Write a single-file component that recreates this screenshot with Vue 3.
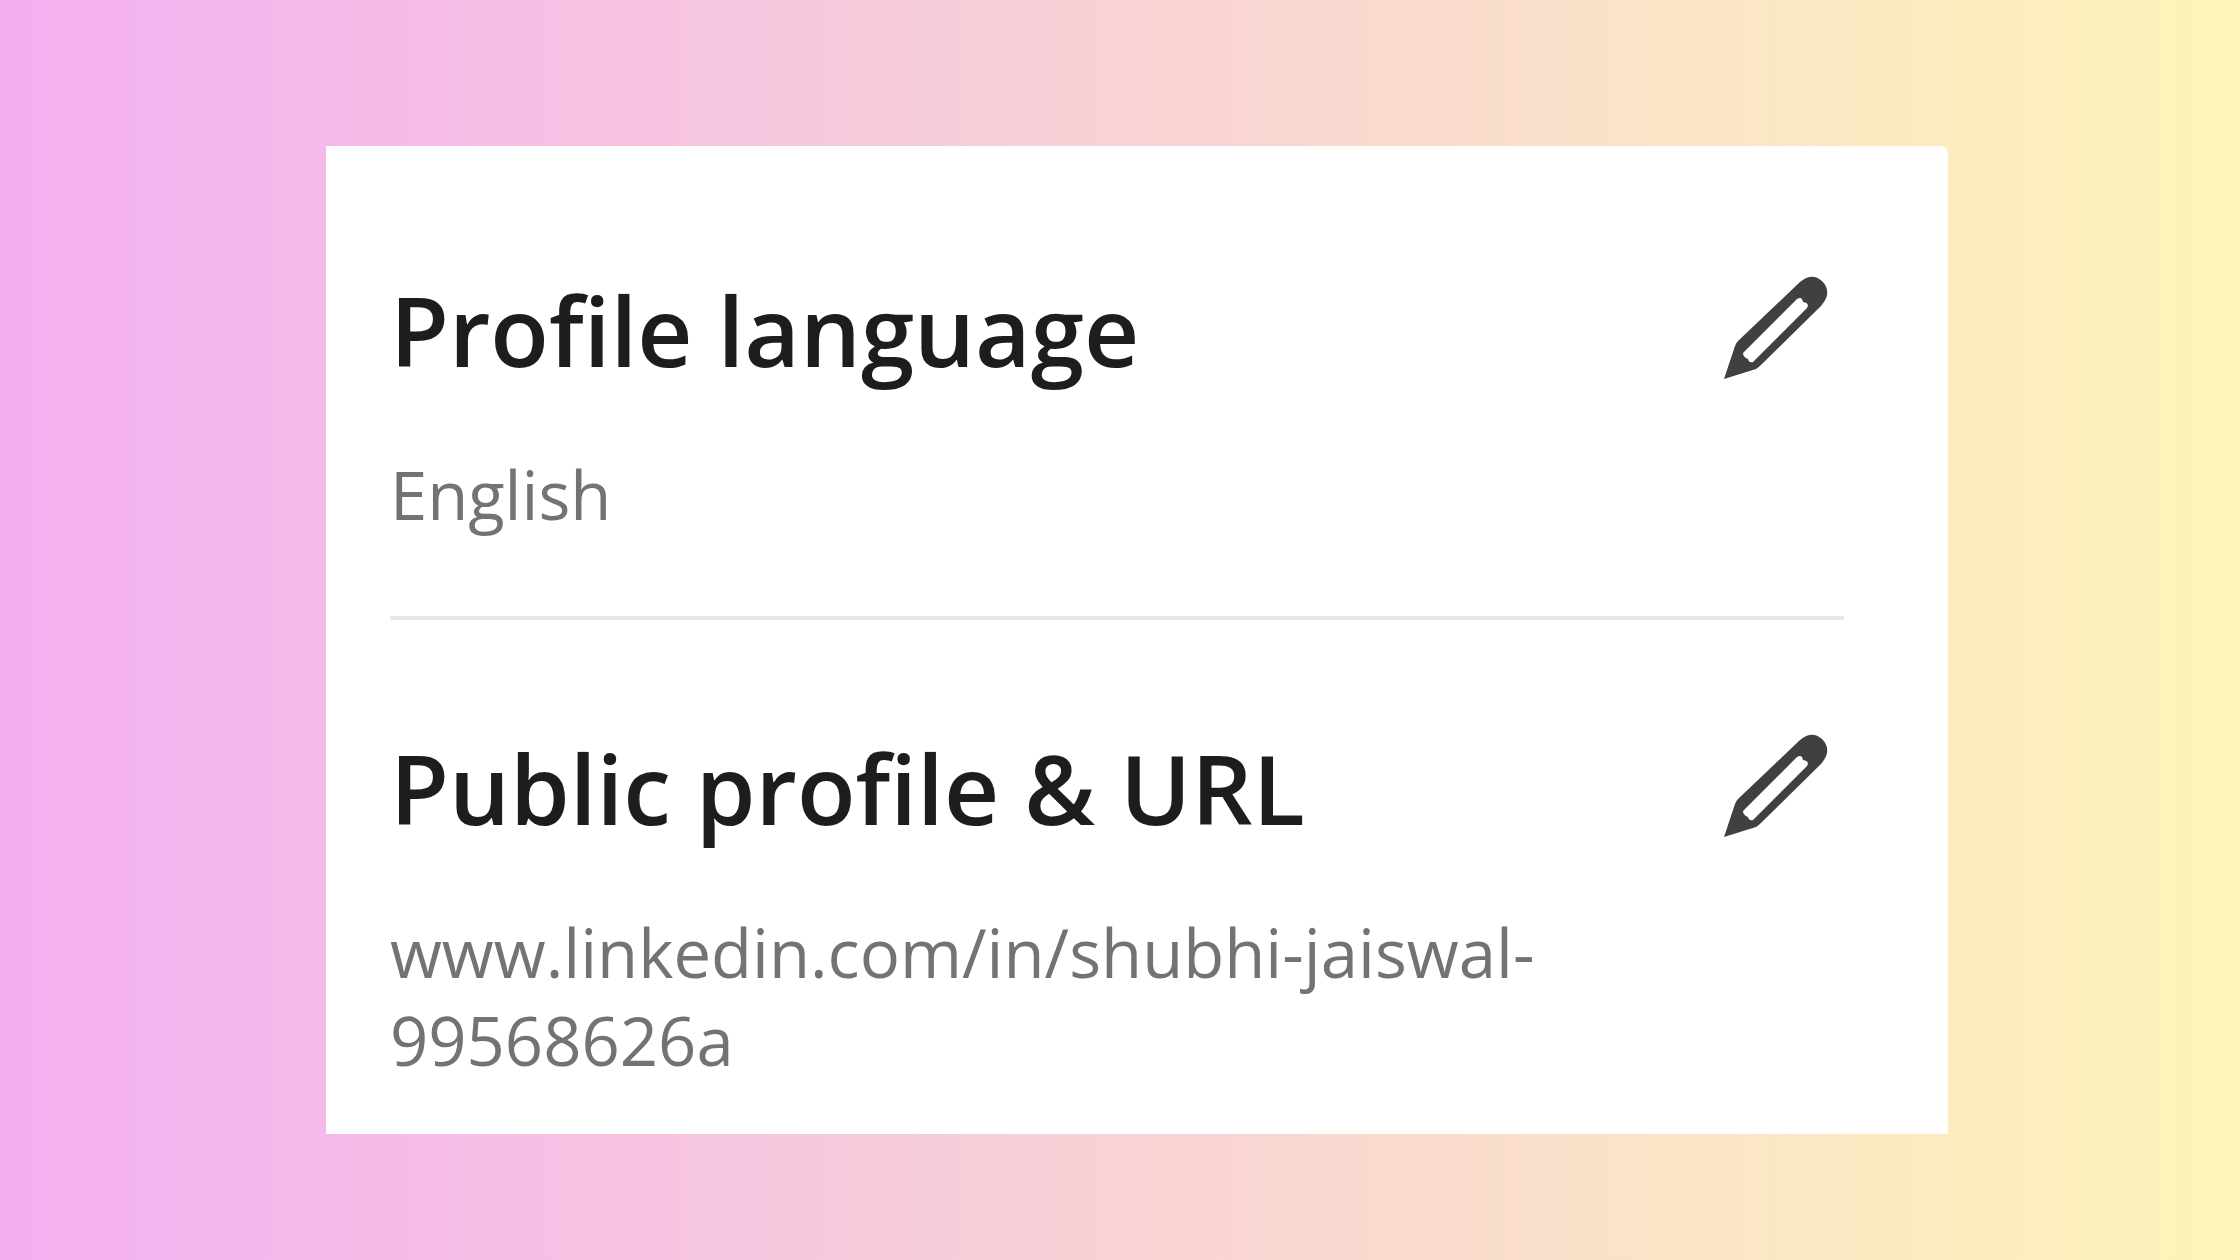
<script setup>
const sections = [
  { title: 'Profile language', lines: ['English'] },
  { title: 'Public profile & URL', lines: ['www.linkedin.com/in/shubhi-jaiswal-', '99568626a'] },
]
</script>

<template>
  <main class="page">
    <article class="card">
      <section v-for="section in sections" :key="section.title" class="section">
        <div class="heading">
          <h2>{{ section.title }}</h2>
          <button type="button" :aria-label="'Edit ' + section.title">
            <svg viewBox="0 0 104 104" aria-hidden="true">
              <path
                fill="#404040"
                fill-rule="evenodd"
                d="M0 101 L11 68 Q12 65 14 63 L76 4 Q88 -6 98 3 Q109 14 97 28 L38 86 Q35 89 32 91 Z M19 75 L73 21 Q78 18 79 24 Q86 25 83 30 L29 84 Q25 85 24 81 Q19 79 19 75 Z"
              />
            </svg>
          </button>
        </div>
        <p><template v-for="(line, i) in section.lines" :key="line"><br v-if="i" />{{ line }}</template></p>
      </section>
    </article>
  </main>
</template>

<style>
body {
  margin: 0;
}
</style>

<style scoped>
.page {
  min-height: 100vh;
  box-sizing: border-box;
  padding: 146px 13.04% 126px 14.55%;
  background: linear-gradient(90deg, #f3b0f1 1%, #fdf4b9 99%);
  font-family: "Open Sans", "Noto Sans", sans-serif;
}
.card {
  box-sizing: border-box;
  padding: 0 104px 50px 64px;
  background: #fff;
  border-radius: 0 8px 0 0;
}
.section {
  padding-top: 128px;
}
.section + .section {
  margin-top: 78px;
  padding-top: 112px;
  border-top: 4px solid #e8e8e8;
}
.heading {
  display: flex;
  justify-content: space-between;
  align-items: center;
  height: 112px;
}
h2 {
  margin: 0;
  color: #1d1d1d;
  font-size: 96px;
  font-weight: 600;
  line-height: 112px;
  white-space: nowrap;
}
button {
  padding: 0;
  margin-right: 16px;
  border: 0;
  background: none;
  cursor: pointer;
}
svg {
  display: block;
  width: 104px;
  height: 104px;
  overflow: visible;
}
p {
  margin: 64px 0 0;
  color: #737373;
  font-size: 67px;
  line-height: 88px;
}
</style>
